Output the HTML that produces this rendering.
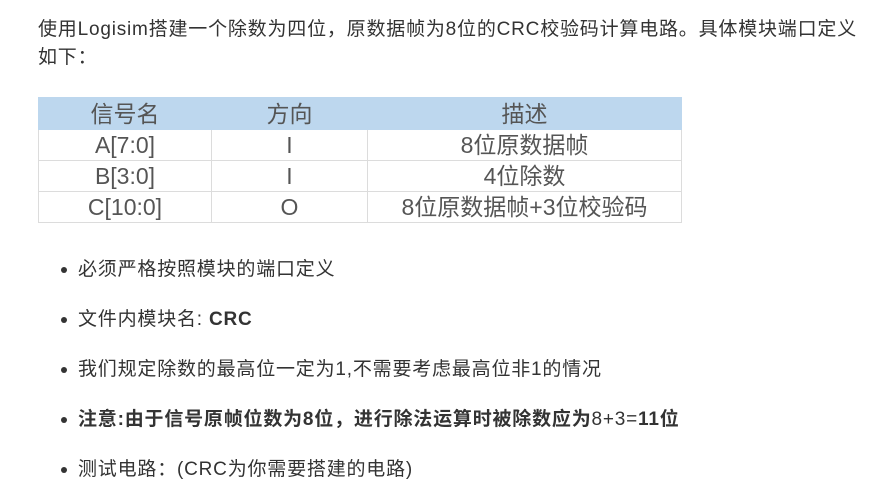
<!DOCTYPE html>
<html><head><meta charset="utf-8"><style>
body{margin:0;width:870px;height:488px;background:#fff;font-family:"Liberation Sans","Noto Sans CJK SC",sans-serif;color:#333;font-size:19px;letter-spacing:0.8px;overflow:hidden}
.p{position:absolute;left:38px;top:16px;width:826px;line-height:28px}
table{position:absolute;left:38px;top:97px;width:644px;border-collapse:collapse;font-size:23px;color:#555;text-align:center;letter-spacing:0}
td{border:1px solid #dcdcdc;height:30px;padding:0;line-height:30px}
tr.h td{background:#bdd7ee;height:31px;border-color:#bdd7ee}
ul{position:absolute;left:0;top:256px;margin:0;padding:0;list-style:none}
li{position:absolute;left:78px;white-space:nowrap;line-height:28px}
li:before{content:"";position:absolute;left:-17px;top:11px;width:6px;height:6px;border-radius:50%;background:#333}
b{font-weight:bold}
</style></head><body>
<div class="p">使用Logisim搭建一个除数为四位，原数据帧为8位的CRC校验码计算电路。具体模块端口定义如下：</div>
<table>
<tr class="h"><td style="width:172px">信号名</td><td style="width:155px">方向</td><td>描述</td></tr>
<tr><td>A[7:0]</td><td>I</td><td>8位原数据帧</td></tr>
<tr><td>B[3:0]</td><td>I</td><td>4位除数</td></tr>
<tr><td>C[10:0]</td><td>O</td><td>8位原数据帧+3位校验码</td></tr>
</table>
<ul>
<li style="top:0">必须严格按照模块的端口定义</li>
<li style="top:50px">文件内模块名: <b>CRC</b></li>
<li style="top:100px">我们规定除数的最高位一定为1,不需要考虑最高位非1的情况</li>
<li style="top:150px"><b>注意:由于信号原帧位数为8位，进行除法运算时被除数应为</b>8+3=<b>11位</b></li>
<li style="top:200px">测试电路：(CRC为你需要搭建的电路)</li>
</ul>
</body></html>
